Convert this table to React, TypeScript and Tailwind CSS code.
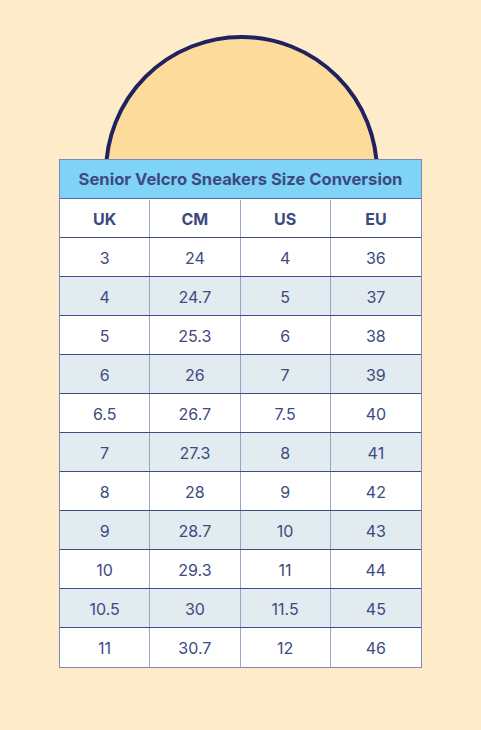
import React from 'react';

const rows: [string, string, string, string][] = [
  ['3', '24', '4', '36'],
  ['4', '24.7', '5', '37'],
  ['5', '25.3', '6', '38'],
  ['6', '26', '7', '39'],
  ['6.5', '26.7', '7.5', '40'],
  ['7', '27.3', '8', '41'],
  ['8', '28', '9', '42'],
  ['9', '28.7', '10', '43'],
  ['10', '29.3', '11', '44'],
  ['10.5', '30', '11.5', '45'],
  ['11', '30.7', '12', '46'],
];

const App: React.FC = () => {
  return (
    <div className="min-h-[730px] w-full bg-[#feebc9] font-['Inter',sans-serif] text-[#3d4a80]">
      <div className="relative mx-auto w-[363px] pt-[159px]">
        {/* sun */}
        <div className="absolute left-[45px] top-[35px] h-[275px] w-[275px] rounded-full border-4 border-[#1f2160] bg-[#fddb9a]" />

        {/* Table */}
        <div className="relative border border-[#7d8ab8] bg-white">
          <div className="flex h-[39px] items-center justify-center border-b border-[#5a689e] bg-[#7fd3f6] pt-px text-[16.6px] font-bold">
            Senior Velcro Sneakers Size Conversion
          </div>
          <div className="grid h-[39px] grid-cols-4 border-b border-[#3e4d8a] pt-px text-[16px] font-bold">
            {['UK', 'CM', 'US', 'EU'].map((h, i) => (
              <div
                key={h}
                className={`flex items-center justify-center ${i < 3 ? 'border-r border-[#98a3c6]' : ''}`}
              >
                {h}
              </div>
            ))}
          </div>
          {rows.map((r, ri) => (
            <div
              key={ri}
              className={`grid h-[39px] grid-cols-4 text-[16px] ${ri % 2 === 1 ? 'bg-[#e2ebf0]' : 'bg-white'} ${ri < rows.length - 1 ? 'border-b border-[#3e4d8a]' : ''}`}
            >
              {r.map((c, ci) => (
                <div
                  key={ci}
                  className={`flex items-center justify-center pt-px ${ci < 3 ? 'border-r border-[#98a3c6]' : ''}`}
                >
                  {c}
                </div>
              ))}
            </div>
          ))}
        </div>
      </div>
    </div>
  );
};

export default App;
